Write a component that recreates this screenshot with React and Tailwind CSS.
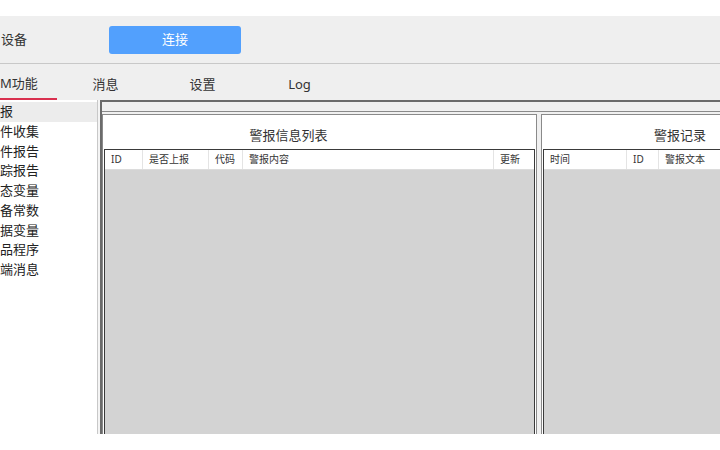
import React from 'react';

const sideItems = ['报', '件收集', '件报告', '踪报告', '态变量', '备常数', '据变量', '品程序', '端消息'];

const tabs = ['消息', '设置', 'Log'];

const alarmCols = [
  { name: 'ID', w: 'w-[38px]' },
  { name: '是否上报', w: 'w-[66px]' },
  { name: '代码', w: 'w-[34px]' },
  { name: '警报内容', w: 'w-[251px]' },
  { name: '更新', w: 'flex-1' },
];

const recordCols = [
  { name: '时间', w: 'w-[83px]' },
  { name: 'ID', w: 'w-[32px]' },
  { name: '警报文本', w: 'flex-1' },
];

const Panel = ({ title, cols, width, titlePad }) => (
  <div className={`${width} shrink-0 h-[340px] border border-[#8a8a8a] bg-white p-px flex flex-col`}>
    <div className={`h-[33px] flex items-end justify-center pb-[4px] text-[13px] text-[#333] ${titlePad}`}>{title}</div>
    <div className="flex-1 flex flex-col border border-[#3a3a3a] border-b-0">
      <div className="h-[20px] flex bg-white border-b border-[#dcdcdc]">
        {cols.map((c, i) => (
          <div
            key={c.name}
            className={`${c.w} shrink-0 h-full flex items-center pl-[6px] text-[10px] text-[#333] ${i < cols.length - 1 ? 'border-r border-[#e4e4e4]' : ''}`}
          >
            {c.name}
          </div>
        ))}
      </div>
      <div className="flex-1 bg-[#d3d3d3]"></div>
    </div>
  </div>
);

const App = () => {
  return (
    <div
      className="w-[720px] h-[450px] bg-white overflow-hidden"
      style={{ fontFamily: '"Noto Sans", "Noto Sans CJK SC", sans-serif' }}
    >
      <div className="h-[16px]"></div>
      <div className="h-[418px] flex flex-col bg-[#efefef] overflow-hidden">
        {/* toolbar */}
        <div className="h-[48px] shrink-0 flex items-center border-b border-[#c8c8c8]">
          <div className="w-[109px] pl-px text-[13px] text-[#333]">设备</div>
          <button className="w-[132px] h-[28px] rounded-[3px] bg-[#52a0fd] text-white text-[13px]">连接</button>
        </div>

        {/* tabs */}
        <div className="h-[36px] shrink-0 flex">
          <div className="w-[57px] h-full flex items-center pt-[5px] text-[13px] text-[#333] border-b-2 border-[#d9304f]">
            M功能
          </div>
          {tabs.map((t) => (
            <div key={t} className="w-[97px] h-full flex items-center justify-center pt-[5px] text-[13px] text-[#333]">
              {t}
            </div>
          ))}
        </div>

        {/* main */}
        <div className="flex-1 flex min-h-0">
          <div className="w-[98px] shrink-0 bg-white border-r border-[#c8c8c8] pt-[2px]">
            {sideItems.map((s, i) => (
              <div
                key={s}
                className={`h-[19.75px] flex items-center text-[13px] text-[#222] ${i === 0 ? 'bg-[#ececec]' : ''}`}
              >
                {s}
              </div>
            ))}
          </div>
          <div className="w-[2px] shrink-0 bg-[#f4f4f4]"></div>
          <div className="flex-1 flex flex-col border-t-2 border-l-2 border-[#6b6b6b] bg-[#f0f0f0] min-w-0 overflow-hidden">
            <div className="h-[10px] shrink-0 border-b border-[#8a8a8a]"></div>
            <div className="flex gap-[4px] pt-[2px]">
              <Panel title="警报信息列表" cols={alarmCols} width="w-[435px]" titlePad="pr-[62px]" />
              <Panel title="警报记录" cols={recordCols} width="w-[278px]" titlePad="" />
            </div>
          </div>
        </div>
      </div>
    </div>
  );
};

export default App;
